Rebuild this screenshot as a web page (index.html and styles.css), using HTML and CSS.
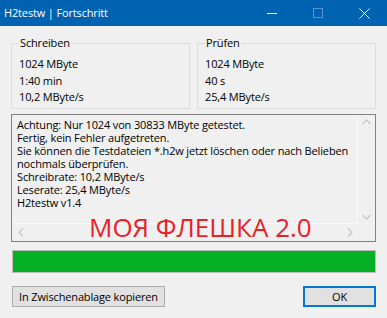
FILE: index.html
```html
<!DOCTYPE html>
<html lang="de">
<head>
<meta charset="utf-8">
<title>H2testw | Fortschritt</title>
<link rel="stylesheet" href="styles.css">
</head>
<body>
<div class="window">
  <div class="titlebar">
    <div class="title">H2testw | Fortschritt</div>
    <div class="controls">
      <div class="ctl"><svg width="10" height="10" viewBox="0 0 10 10"><path d="M0 5.5H10" stroke="#fff" stroke-width="1"/></svg></div>
      <div class="ctl"><svg width="10" height="10" viewBox="0 0 10 10"><rect x="0.5" y="0.5" width="9" height="9" fill="none" stroke="#5a93cf" stroke-width="1"/></svg></div>
      <div class="ctl"><svg width="11" height="11" viewBox="0 0 11 11"><path d="M0.5 0.5L10.5 10.5M10.5 0.5L0.5 10.5" stroke="#fff" stroke-width="1"/></svg></div>
    </div>
  </div>
  <div class="content">
    <div class="groups">
      <fieldset class="group">
        <legend>Schreiben</legend>
        <div class="val">1024 MByte</div>
        <div class="val">1:40 min</div>
        <div class="val">10,2 MByte/s</div>
      </fieldset>
      <fieldset class="group">
        <legend>Prüfen</legend>
        <div class="val">1024 MByte</div>
        <div class="val">40 s</div>
        <div class="val">25,4 MByte/s</div>
      </fieldset>
    </div>
    <div class="textbox">
      <div class="text">Achtung: Nur 1024 von 30833 MByte getestet.<br>Fertig, kein Fehler aufgetreten.<br>Sie können die Testdateien *.h2w jetzt löschen oder nach Belieben<br>nochmals überprüfen.<br>Schreibrate: 10,2 MByte/s<br>Leserate: 25,4 MByte/s<br>H2testw v1.4</div>
      <div class="vscroll">
        <svg width="9" height="6" viewBox="0 0 9 6"><path d="M0.5 5L4.5 1L8.5 5" fill="none" stroke="#c8c8c8" stroke-width="1.3"/></svg>
        <svg width="9" height="6" viewBox="0 0 9 6"><path d="M0.5 1L4.5 5L8.5 1" fill="none" stroke="#c8c8c8" stroke-width="1.3"/></svg>
      </div>
      <div class="hscroll">
        <svg width="6" height="9" viewBox="0 0 6 9"><path d="M5 0.5L1 4.5L5 8.5" fill="none" stroke="#c8c8c8" stroke-width="1.3"/></svg>
        <svg width="6" height="9" viewBox="0 0 6 9"><path d="M1 0.5L5 4.5L1 8.5" fill="none" stroke="#c8c8c8" stroke-width="1.3"/></svg>
      </div>
      <div class="corner"></div>
      <div class="stamp">МОЯ ФЛЕШКА 2.0</div>
    </div>
    <div class="progress"><div class="fill" style="width:100%"></div></div>
    <div class="buttons">
      <button class="btn">In Zwischenablage kopieren</button>
      <button class="btn ok">OK</button>
    </div>
  </div>
</div>
</body>
</html>
```
FILE: styles.css
```css
* { box-sizing: border-box; }
html, body { margin: 0; padding: 0; }
body {
  width: 387px;
  height: 318px;
  overflow: hidden;
  background: #f0f0f0;
  font-family: "Open Sans", "Noto Sans", sans-serif;
  font-size: 11px;
  letter-spacing: -0.15px;
  color: #000;
}
.window { width: 387px; height: 318px; }
.titlebar {
  height: 26px;
  background: #0063b1;
  color: #fff;
  display: flex;
  align-items: center;
  justify-content: space-between;
}
.title { padding-left: 4px; font-size: 11px; line-height: 16px; }
.controls { display: flex; height: 26px; }
.ctl {
  width: 46px;
  height: 26px;
  display: flex;
  align-items: center;
  justify-content: center;
}
.content { padding: 9px 11px 0 11px; }
.groups {
  display: grid;
  grid-template-columns: 179px 179px;
  column-gap: 7px;
}
.group {
  margin: 0;
  border: 1px solid #dcdcdc;
  padding: 5px 7px 4px 7px;
  min-width: 0;
  height: 74px;
}
.group legend {
  padding: 0 1px;
  margin-left: 0;
  line-height: 16px;
}
.val { line-height: 16.5px; }
.textbox {
  position: relative;
  margin-top: 5px;
  height: 128px;
  border: 1px solid #828282;
  display: grid;
  grid-template-columns: 1fr 17px;
  grid-template-rows: 1fr 17px;
}
.text {
  padding: 3px 0 0 5px;
  line-height: 13px;
  white-space: nowrap;
  overflow: hidden;
  border-right: 1px solid #fafafa;
  border-bottom: 1px solid #fafafa;
}
.vscroll {
  display: flex;
  flex-direction: column;
  justify-content: space-between;
  align-items: center;
  padding: 4px 0 4px 0;
}
.hscroll {
  display: flex;
  justify-content: space-between;
  align-items: center;
  padding: 0 5px 0 6px;
}
.stamp {
  position: absolute;
  left: 77px;
  top: 97px;
  font-size: 26px;
  letter-spacing: 0;
  line-height: 30px;
  color: #e8202a;
  white-space: nowrap;
}
.progress {
  margin-top: 8px;
  margin-left: 1px;
  height: 23px;
  border: 1px solid #bcbcbc;
  background: #e6e6e6;
}
.fill { height: 100%; background: #06b025; }
.buttons {
  margin-top: 13px;
  margin-left: 1px;
  display: flex;
  justify-content: space-between;
}
.btn {
  font-family: inherit;
  font-size: 11px;
  letter-spacing: -0.15px;
  white-space: nowrap;
  color: #000;
  background: #e1e1e1;
  border: 1px solid #adadad;
  height: 21px;
  width: 153px;
  padding: 0;
  line-height: 17px;
}
.btn.ok {
  width: 73px;
  border: 2px solid #0078d7;
  line-height: 15px;
}
```
